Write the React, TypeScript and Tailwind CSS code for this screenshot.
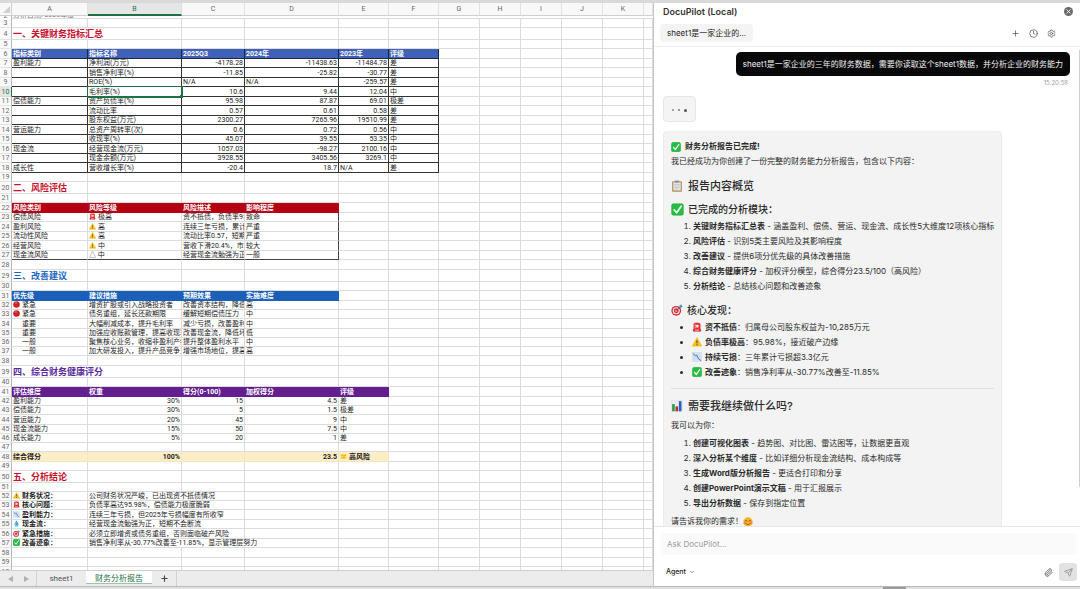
import React, { useState } from 'react';
import { Clock, Plus, Settings, Paperclip, Send, ChevronDown, X } from 'lucide-react';

type EmojiName =
  | 'check' | 'siren' | 'warning' | 'trend' | 'drop' | 'target'
  | 'red' | 'clipboard' | 'bars' | 'smile' | 'weary';

const emojiShapes: Record<EmojiName, React.ReactNode> = {
  check: (
    <>
      <rect x="1" y="1" width="30" height="30" rx="5" fill="#18a534" />
      <rect x="2.5" y="2.5" width="27" height="27" rx="4" fill="#27bd43" />
      <path d="M8 17l6 7L25 8" fill="none" stroke="#fff" strokeWidth="4" strokeLinecap="round" strokeLinejoin="round" />
    </>
  ),
  siren: (
    <>
      <path d="M5 25V8c0-4 3-6 11-6s11 2 11 6v17z" fill="#e5262f" />
      <path d="M8 20V11c0-3 2-6 5-6v15z" fill="#ff7a7a" />
      <circle cx="17" cy="13" r="5" fill="#ffe3d8" />
      <rect x="3" y="23" width="26" height="7" rx="2" fill="#c3242e" />
      <rect x="9" y="24" width="14" height="4" fill="#f2a09a" />
    </>
  ),
  warning: (
    <>
      <path d="M16 2L31 29H1z" fill="#fcc21b" stroke="#f5b010" strokeWidth="2" strokeLinejoin="round" />
      <path d="M14 11h4l-1 10h-2z" fill="#33302a" />
      <circle cx="16" cy="25" r="2" fill="#33302a" />
    </>
  ),
  trend: (
    <>
      <rect x="2" y="2" width="28" height="28" fill="#dce7f3" stroke="#b4c4d6" />
      <path d="M9 2v28M16 2v28M23 2v28M2 9h28M2 16h28M2 23h28" stroke="#b4c9df" />
      <path d="M3 5l8 7 4-2 6 12 8 6" fill="none" stroke="#3569b5" strokeWidth="3" />
    </>
  ),
  drop: (
    <>
      <path d="M16 1c3 8 9 12 9 19a9 10 0 0 1-18 0c0-7 6-11 9-19z" fill="#39a9e8" />
      <path d="M12 17c-2 5 0 8 3 9" fill="none" stroke="#c8ecff" strokeWidth="3" strokeLinecap="round" />
    </>
  ),
  target: (
    <>
      <circle cx="14" cy="18" r="13" fill="#d5283a" />
      <circle cx="14" cy="18" r="9.5" fill="#f7e9e7" />
      <circle cx="14" cy="18" r="6.5" fill="#d5283a" />
      <circle cx="14" cy="18" r="2.5" fill="#f7e9e7" />
      <path d="M14 18L27 6" stroke="#38454f" strokeWidth="2" />
      <path d="M22 9l1-6 4-2 1 3 3 1-2 4z" fill="#3c9bb3" />
    </>
  ),
  red: (
    <>
      <circle cx="16" cy="16" r="15" fill="#cf1f25" />
      <ellipse cx="14" cy="9" rx="7" ry="4" fill="#e8524c" />
    </>
  ),
  clipboard: (
    <>
      <rect x="3" y="3" width="26" height="28" rx="2" fill="#b78a56" />
      <rect x="6" y="6" width="20" height="22" fill="#e2e4e6" />
      <path d="M9 12h14M9 16h14M9 20h14M9 24h9" stroke="#b3b9c0" strokeWidth="1.5" />
      <rect x="10" y="1" width="12" height="6" rx="2" fill="#8d949c" />
    </>
  ),
  bars: (
    <>
      <rect x="1" y="1" width="30" height="30" fill="#e9eef3" stroke="#cbd5df" />
      <rect x="3" y="11" width="7" height="19" fill="#2b9a48" />
      <rect x="12" y="17" width="7" height="13" fill="#c4282f" />
      <rect x="21" y="3" width="7" height="27" fill="#2b5fc0" />
    </>
  ),
  smile: (
    <>
      <circle cx="16" cy="16" r="15" fill="#fbb42d" />
      <circle cx="6" cy="19" r="4" fill="#f58b54" />
      <circle cx="26" cy="19" r="4" fill="#f58b54" />
      <path d="M7 13c1-4 5-4 6 0M19 13c1-4 5-4 6 0M9 20c3 6 11 6 14 0" fill="none" stroke="#6b3d12" strokeWidth="2.2" strokeLinecap="round" />
    </>
  ),
  weary: (
    <>
      <path d="M3 5h26v7l-2 3 2 4v8H3v-8l3-4-3-3z" fill="#ffd54a" />
      <path d="M7 12h6M19 12h6M10 23c3-4 9-4 12 0" fill="none" stroke="#d8941a" strokeWidth="2.5" strokeLinecap="round" />
    </>
  ),
};

const Emoji: React.FC<{ name: EmojiName; className?: string }> = ({ name, className = 'size-[7px] mr-[2px]' }) => (
  <svg viewBox="0 0 32 32" aria-hidden="true" className={`inline-block shrink-0 align-[-1px] ${className}`}>
    {emojiShapes[name]}
  </svg>
);

interface SheetRow {
  kind: 'title' | 'head' | 'grid' | 'plain' | 'risk' | 'riskLast' | 'total' | 'note';
  color?: string;
  cells: React.ReactNode[];
}

const e = (name: EmojiName, text: string) => (
  <>
    <Emoji name={name} />
    {text}
  </>
);

const indent = (text: string) => <span className="pl-[9px]">{text}</span>;

const sheetRows: Record<number, SheetRow> = {
  4: { kind: 'title', color: 'text-[#c8102e]', cells: ['一、关键财务指标汇总'] },
  6: { kind: 'head', color: 'bg-[#3f62b8]', cells: ['指标类别', '指标名称', '2025Q3', '2024年', '2023年', '评级'] },
  7: { kind: 'grid', cells: ['盈利能力', '净利润(万元)', -4178.28, -11438.63, -11484.78, '差'] },
  8: { kind: 'grid', cells: ['', '销售净利率(%)', -11.85, -25.82, -30.77, '差'] },
  9: { kind: 'grid', cells: ['', 'ROE(%)', 'N/A', 'N/A', -259.57, '差'] },
  10: { kind: 'grid', cells: ['', '毛利率(%)', 10.6, 9.44, 12.04, '中'] },
  11: { kind: 'grid', cells: ['偿债能力', '资产负债率(%)', 95.98, 87.87, 69.01, '极差'] },
  12: { kind: 'grid', cells: ['', '流动比率', 0.57, 0.61, 0.58, '差'] },
  13: { kind: 'grid', cells: ['', '股东权益(万元)', 2300.27, 7265.96, 19510.99, '差'] },
  14: { kind: 'grid', cells: ['营运能力', '总资产周转率(次)', 0.6, 0.72, 0.56, '中'] },
  15: { kind: 'grid', cells: ['', '收现率(%)', 45.07, 39.55, 53.35, '中'] },
  16: { kind: 'grid', cells: ['现金流', '经营现金流(万元)', 1057.03, -98.27, 2100.16, '中'] },
  17: { kind: 'grid', cells: ['', '现金余额(万元)', 3928.55, 3405.56, 3269.1, '中'] },
  18: { kind: 'grid', cells: ['成长性', '营收增长率(%)', -20.4, 18.7, 'N/A', '差'] },
  20: { kind: 'title', color: 'text-[#c8102e]', cells: ['二、风险评估'] },
  22: { kind: 'head', color: 'bg-[#b40012]', cells: ['风险类别', '风险等级', '风险描述', '影响程度'] },
  23: { kind: 'risk', cells: ['偿债风险', e('siren', '极高'), '资不抵债，负债率95', '致命'] },
  24: { kind: 'risk', cells: ['盈利风险', e('warning', '高'), '连续三年亏损，累计', '严重'] },
  25: { kind: 'risk', cells: ['流动性风险', e('warning', '高'), '流动比率0.57，短期', '严重'] },
  26: { kind: 'risk', cells: ['经营风险', e('warning', '中'), '营收下滑20.4%，市场', '较大'] },
  27: { kind: 'riskLast', cells: ['现金流风险', '△ 中', '经营现金流勉强为正', '一般'] },
  29: { kind: 'title', color: 'text-[#1a66c0]', cells: ['三、改善建议'] },
  31: { kind: 'head', color: 'bg-[#1a5fb8]', cells: ['优先级', '建议措施', '预期效果', '实施难度'] },
  32: { kind: 'plain', cells: [e('red', '紧急'), '增资扩股或引入战略投资者', '改善资本结构，降低', '高'] },
  33: { kind: 'plain', cells: [e('red', '紧急'), '债务重组，延长还款期限', '缓解短期偿债压力', '中'] },
  34: { kind: 'plain', cells: [indent('重要'), '大幅削减成本，提升毛利率', '减少亏损，改善盈利', '中'] },
  35: { kind: 'plain', cells: [indent('重要'), '加强应收账款管理，提高收现率', '改善现金流，降低坏', '低'] },
  36: { kind: 'plain', cells: [indent('一般'), '聚焦核心业务，收缩非盈利产线', '提升整体盈利水平', '中'] },
  37: { kind: 'plain', cells: [indent('一般'), '加大研发投入，提升产品竞争力', '增强市场地位，提高', '高'] },
  39: { kind: 'title', color: 'text-[#5b2a9d]', cells: ['四、综合财务健康评分'] },
  41: { kind: 'head', color: 'bg-[#631f90]', cells: ['评估维度', '权重', '得分(0-100)', '加权得分', '评级'] },
  42: { kind: 'plain', cells: ['盈利能力', '30%', 15, 4.5, '差'] },
  43: { kind: 'plain', cells: ['偿债能力', '30%', 5, 1.5, '极差'] },
  44: { kind: 'plain', cells: ['营运能力', '20%', 45, 9, '中'] },
  45: { kind: 'plain', cells: ['现金流能力', '15%', 50, 7.5, '中'] },
  46: { kind: 'plain', cells: ['成长能力', '5%', 20, 1, '差'] },
  48: { kind: 'total', cells: ['综合得分', '100%', '', 23.5, e('weary', '高风险')] },
  50: { kind: 'title', color: 'text-[#c8102e]', cells: ['五、分析结论'] },
  52: { kind: 'note', cells: [e('warning', '财务状况：'), '公司财务状况严峻，已出现资不抵债情况'] },
  53: { kind: 'note', cells: [e('siren', '核心问题：'), '负债率高达95.98%，偿债能力极度脆弱'] },
  54: { kind: 'note', cells: [e('trend', '盈利能力：'), '连续三年亏损，但2025年亏损幅度有所收窄'] },
  55: { kind: 'note', cells: [e('drop', '现金流：'), '经营现金流勉强为正，短期不会断流'] },
  56: { kind: 'note', cells: [e('target', '紧急措施：'), '必须立即增资或债务重组，否则面临破产风险'] },
  57: { kind: 'note', cells: [e('check', '改善迹象：'), '销售净利率从-30.77%改善至-11.85%，显示管理层努力'] },
};

const columns = ['A', 'B', 'C', 'D', 'E', 'F', 'G', 'H', 'I', 'J', 'K', ''];
const rowNumbers = Array.from({ length: 58 }, (_, i) => i + 3);
const narrowRows = [30, 32, 36, 40, 42, 46, 52];

const cellClass = (row: SheetRow | undefined, col: number): string => {
  const base = 'border-r border-b px-[1px] overflow-x-clip ';
  if (!row) return base + 'border-[#dcdcdc]';
  const filled = col < row.cells.length;
  switch (row.kind) {
    case 'title':
      return base + 'border-[#dcdcdc] text-[9px] font-bold ' + row.color;
    case 'head':
      return filled
        ? `border-b border-r px-[1px] font-bold text-white ${row.color} ${row.cells.length === 6 ? 'border-[#1c2740]' : 'border-transparent'}`
        : base + 'border-[#dcdcdc]';
    case 'grid':
      return base + (filled ? 'border-[#333]' : 'border-[#dcdcdc]');
    case 'risk':
      return base + (col === 3 ? 'border-r-[#444] border-b-[#dcdcdc]' : 'border-[#dcdcdc]');
    case 'riskLast':
      return base + (col === 3 ? 'border-[#444]' : col < 3 ? 'border-r-[#dcdcdc] border-b-[#444]' : 'border-[#dcdcdc]');
    case 'total':
      return base + (filled ? 'bg-[#fdeec8] border-[#f5e6c0] font-bold' : 'border-[#dcdcdc]');
    case 'note':
      return base + 'border-[#dcdcdc] ' + (col === 0 ? 'font-bold' : '');
    default:
      return base + 'border-[#dcdcdc]';
  }
};

const rowHeight = (n: number): string => {
  const kind = sheetRows[n]?.kind;
  if (kind === 'title') return 'h-[12px]';
  if (kind === 'head') return 'h-[10px]';
  return n % 2 || narrowRows.includes(n) ? 'h-[9px]' : 'h-[10px]';
};

// Long text runs over the empty cells on its right
const spanOf = (n: number, col: number): number => {
  if (col === 0 && (n === 4 || n === 39)) return 2;
  if (col === 1 && n === 57) return 3;
  if (col === 1 && n >= 52 && n <= 56) return 2;
  return 1;
};

const isNumeric = (value: React.ReactNode) =>
  typeof value === 'number' || (typeof value === 'string' && /^\d+%$/.test(value));

const SheetLine: React.FC<{ n: number }> = ({ n }) => {
  const row = sheetRows[n];
  const cells: React.ReactNode[] = [];
  for (let col = 0; col < columns.length; ) {
    const span = spanOf(n, col);
    const value = row?.cells[col];
    const selected = n === 10 && col === 1;
    cells.push(
      <td
        key={col}
        colSpan={span}
        className={
          selected
            ? 'relative z-10 border-r border-b border-[#1e7145] px-[1px] outline outline-[#1e7145]'
            : `${cellClass(row, col)} ${isNumeric(value) ? 'text-right' : ''}`
        }
      >
        {value}
        {selected && <span className="absolute -right-[2px] -bottom-[2px] size-[3px] bg-[#1e7145]" />}
      </td>
    );
    col += span;
  }
  return (
    <tr className={rowHeight(n)}>
      <th
        scope="row"
        className={`border-r border-b font-normal text-center ${n === 10 ? 'border-r-[#1e7145] border-b-[#dcdcdc] bg-[#e4e4e4] text-[#1e7145]' : 'border-r-[#b8b8b8] border-b-[#e4e4e4] bg-[#fafafa] text-[#6b6b6b]'}`}
      >
        {n}
      </th>
      {cells}
    </tr>
  );
};

const Spreadsheet: React.FC = () => (
  <section className="flex min-w-0 flex-1 flex-col border-r border-[#c4c4c4] font-[Roboto,'Noto_Sans_CJK_SC',sans-serif]">
    <div className="min-h-0 flex-1 overflow-hidden">
      <table className="w-full table-fixed border-separate border-spacing-0 text-[7px] leading-[8px] whitespace-nowrap text-[#1c1c1c]">
        <colgroup>
          <col className="w-[12px]" />
          <col className="w-[76px]" />
          <col className="w-[94px]" />
          <col className="w-[63px]" />
          <col className="w-[94px]" />
          <col className="w-[50px]" />
          <col className="w-[50px]" />
          <col className="w-[41px]" />
          <col className="w-[41px]" />
          <col className="w-[41px]" />
          <col className="w-[41px]" />
          <col className="w-[41px]" />
          <col />
        </colgroup>
        <thead>
          <tr className="h-[13px] bg-[#f8f8f8] text-[#666]">
            <th className="border-r border-b border-[#cfcfcf]">
              <svg viewBox="0 0 10 10" className="ml-auto size-[9px]" aria-hidden="true">
                <path d="M9 1v8H1z" fill="#d0d0d0" />
              </svg>
            </th>
            {columns.map((name, i) => (
              <th
                key={i}
                scope="col"
                className={`border-r font-normal ${name === 'B' ? 'border-b-2 border-r-[#dcdcdc] border-b-[#1e7145] bg-[#e6e6e6] text-[#1e7145]' : 'border-b border-r-[#e2e2e2] border-b-[#cfcfcf]'}`}
              >
                {name}
              </th>
            ))}
          </tr>
        </thead>
        <tbody>
          <tr>
            <th scope="row" className="border-r border-r-[#b8b8b8] font-normal text-[#6b6b6b]">
              <div className="flex h-[3px] items-end justify-center overflow-hidden leading-[6px]">2</div>
            </th>
            <td colSpan={12} className="border-b border-[#dcdcdc] px-[1px] text-[#777]">
              <div className="flex h-[2px] items-end overflow-hidden leading-[6px]">分析日期: 2025年度</div>
            </td>
          </tr>
          {rowNumbers.map((n) => (
            <SheetLine key={n} n={n} />
          ))}
        </tbody>
      </table>
    </div>
    <nav className="flex h-4 shrink-0 items-stretch border-t border-[#cfcfcf] bg-[#ececec] text-[8px] text-[#555]">
      <div className="flex w-[37px] items-center justify-around border-r border-[#d2d2d2] px-[3px] text-[#b0b0b0]">
        <button aria-label="上一个工作表">
          <svg viewBox="0 0 6 6" className="size-[6px]"><path d="M5 0v6L0 3z" fill="currentColor" /></svg>
        </button>
        <button aria-label="下一个工作表">
          <svg viewBox="0 0 6 6" className="size-[6px]"><path d="M1 0v6l5-3z" fill="currentColor" /></svg>
        </button>
      </div>
      <button className="w-[49px]">sheet1</button>
      <button className="mb-[2px] w-[66px] border-b border-[#9cc4ae] bg-white pt-[2px] text-[#1e7145]">财务分析报告</button>
      <button aria-label="新建工作表" className="flex w-[25px] items-center justify-center border-r border-[#d2d2d2]">
        <Plus className="size-[9px] text-[#444]" strokeWidth={3} />
      </button>
    </nav>
  </section>
);

interface Item {
  icon?: EmojiName;
  title: string;
  text: string;
}

const modules: Item[] = [
  { title: '关键财务指标汇总表', text: ' - 涵盖盈利、偿债、营运、现金流、成长性5大维度12项核心指标' },
  { title: '风险评估', text: ' - 识别5类主要风险及其影响程度' },
  { title: '改善建议', text: ' - 提供6项分优先级的具体改善措施' },
  { title: '综合财务健康评分', text: ' - 加权评分模型，综合得分23.5/100（高风险）' },
  { title: '分析结论', text: ' - 总结核心问题和改善迹象' },
];

const findings: Item[] = [
  { icon: 'siren', title: '资不抵债', text: '：归属母公司股东权益为-10,285万元' },
  { icon: 'warning', title: '负债率极高', text: '：95.98%，接近破产边缘' },
  { icon: 'trend', title: '持续亏损', text: '：三年累计亏损超3.3亿元' },
  { icon: 'check', title: '改善迹象', text: '：销售净利率从-30.77%改善至-11.85%' },
];

const nextSteps: Item[] = [
  { title: '创建可视化图表', text: ' - 趋势图、对比图、雷达图等，让数据更直观' },
  { title: '深入分析某个维度', text: ' - 比如详细分析现金流结构、成本构成等' },
  { title: '生成Word版分析报告', text: ' - 更适合打印和分享' },
  { title: '创建PowerPoint演示文稿', text: ' - 用于汇报展示' },
  { title: '导出分析数据', text: ' - 保存到指定位置' },
];

const ItemList: React.FC<{ items: Item[]; ordered?: boolean }> = ({ items, ordered }) => {
  const Tag = ordered ? 'ol' : 'ul';
  return (
    <Tag className={`mt-[3px] whitespace-nowrap ${ordered ? 'list-decimal pl-[22px]' : 'list-disc pl-[21px]'}`}>
      {items.map((item) => (
        <li key={item.title}>
          {item.icon && <Emoji name={item.icon} className="mr-[3px] size-[10px] align-[-2px]" />}
          <strong className="font-bold">{item.title}</strong>
          {item.text}
        </li>
      ))}
    </Tag>
  );
};

const ReportMessage: React.FC = () => (
  <article className="mt-[9px] w-[339px] rounded border border-[#ececec] bg-[#f3f3f3] px-[7px] pt-[7px] pb-2 text-[8px] leading-[15px] text-[#2a2a2a]">
    <p className="flex items-center font-bold">
      <Emoji name="check" className="mr-[4px] size-[10px]" />
      财务分析报告已完成!
    </p>
    <p>我已经成功为你创建了一份完整的财务能力分析报告，包含以下内容：</p>
    <h2 className="mt-[9px] flex items-center text-[11px] leading-[16px] font-medium">
      <Emoji name="clipboard" className="mr-[5px] size-[12px]" />
      报告内容概览
    </h2>
    <h3 className="mt-2 flex items-center text-[10px] leading-[14px] font-medium">
      <Emoji name="check" className="mr-[4px] size-[13px]" />
      已完成的分析模块：
    </h3>
    <ItemList items={modules} ordered />
    <h3 className="mt-[9px] flex items-center text-[10px] leading-[14px] font-medium">
      <Emoji name="target" className="mr-[4px] size-[12px]" />
      核心发现：
    </h3>
    <ItemList items={findings} />
    <hr className="mt-2 border-[#e0e0e0]" />
    <h2 className="mt-[9px] flex items-center text-[11px] leading-[16px] font-medium">
      <Emoji name="bars" className="mr-[5px] size-[12px]" />
      需要我继续做什么吗?
    </h2>
    <p className="mt-[4px]">我可以为你：</p>
    <ItemList items={nextSteps} ordered />
    <p className="mt-[3px] flex items-center">
      请告诉我你的需求！
      <Emoji name="smile" className="size-[10px]" />
    </p>
  </article>
);

const ChatPanel: React.FC = () => {
  const [message, setMessage] = useState('');

  return (
    <aside className="flex w-[426px] shrink-0 flex-col bg-white font-[Inter,'Noto_Sans_CJK_SC',sans-serif]">
      <header className="border-b border-[#ececec] pb-1">
        <div className="flex items-center justify-between pr-[7px] pl-[9px]">
          <h1 className="text-[9px] leading-[17px] font-semibold text-[#333]">DocuPilot (Local)</h1>
          <button aria-label="关闭" className="flex size-[9px] items-center justify-center rounded-full bg-[#6a6a6a] text-white">
            <X className="size-[7px]" strokeWidth={3} />
          </button>
        </div>
        <div className="mt-[4px] flex items-center justify-between pr-[24px] pl-[6px]">
          <button className="h-[18px] rounded bg-[#f4f4f4] px-[7px] text-[8px] text-[#222]">sheet1是一家企业的...</button>
          <div className="flex items-center gap-[9px] text-[#555]">
            <button aria-label="新对话"><Plus className="size-[9px]" /></button>
            <button aria-label="历史记录"><Clock className="size-[9px]" /></button>
            <button aria-label="设置"><Settings className="size-[9px]" /></button>
          </div>
        </div>
      </header>

      <div className="relative min-h-0 flex-1 overflow-hidden pt-[5px] pr-[10px] pl-[9px]">
        <div className="flex flex-col items-end">
          <p className="rounded-[5px] bg-[#080808] px-[7px] text-[8px] leading-[24px] whitespace-nowrap text-[#f2f2f2]">
            sheet1是一家企业的三年的财务数据，需要你读取这个sheet1数据，并分析企业的财务能力
          </p>
          <time className="mt-[2px] pr-[2px] text-[6px] leading-[10px] text-[#a0a0a0]">15:20:58</time>
        </div>
        <div className="mt-2 flex h-[26px] w-[33px] items-center justify-center gap-1 rounded border border-[#e6e6e6] bg-[#f4f4f4] pt-[2px]">
          <span className="size-[2px] rounded-full bg-[#888]" />
          <span className="size-[2px] rounded-full bg-[#777]" />
          <span className="size-[3px] rounded-full bg-[#555]" />
        </div>
        <ReportMessage />
        <div className="absolute top-[3px] right-0 h-[437px] w-px bg-[#cfcfcf]" />
      </div>

      <form className="border-t border-[#e8e8e8] pt-[6px] pr-[3px] pb-[5px] pl-[7px]" onSubmit={(ev) => ev.preventDefault()}>
        <input
          aria-label="Ask DocuPilot"
          value={message}
          onChange={(ev) => setMessage(ev.target.value)}
          placeholder="Ask DocuPilot..."
          className="block h-[22px] w-full rounded bg-[#fafafa] px-[6px] text-[8px] outline-none placeholder:text-[#9a9a9a]"
        />
        <div className="mt-2 flex items-center justify-between">
          <button type="button" className="flex items-center gap-[3px] pl-[5px] text-[7px] font-medium text-[#222]">
            Agent
            <ChevronDown className="size-[6px]" />
          </button>
          <div className="flex items-center gap-[6px]">
            <button type="button" aria-label="添加附件"><Paperclip className="size-[9px] text-[#444]" /></button>
            <button aria-label="发送" className="flex size-[18px] items-center justify-center rounded-[3px] bg-[#e2e2e2] text-[#8c8c8c]">
              <Send className="size-[9px]" />
            </button>
          </div>
        </div>
      </form>
    </aside>
  );
};

export default function App() {
  return (
    <div className="flex h-screen flex-col overflow-hidden bg-white">
      <div className="h-[3px] shrink-0 bg-[#d9d9d9]" />
      <main className="flex min-h-0 flex-1">
        <Spreadsheet />
        <ChatPanel />
      </main>
      <footer className="flex h-[3px] shrink-0 justify-end border-t border-[#b8b8b8] bg-[#e0e0e0] pr-[174px]">
        <div className="w-[23px] bg-[#9a9a9a]" />
      </footer>
    </div>
  );
}
